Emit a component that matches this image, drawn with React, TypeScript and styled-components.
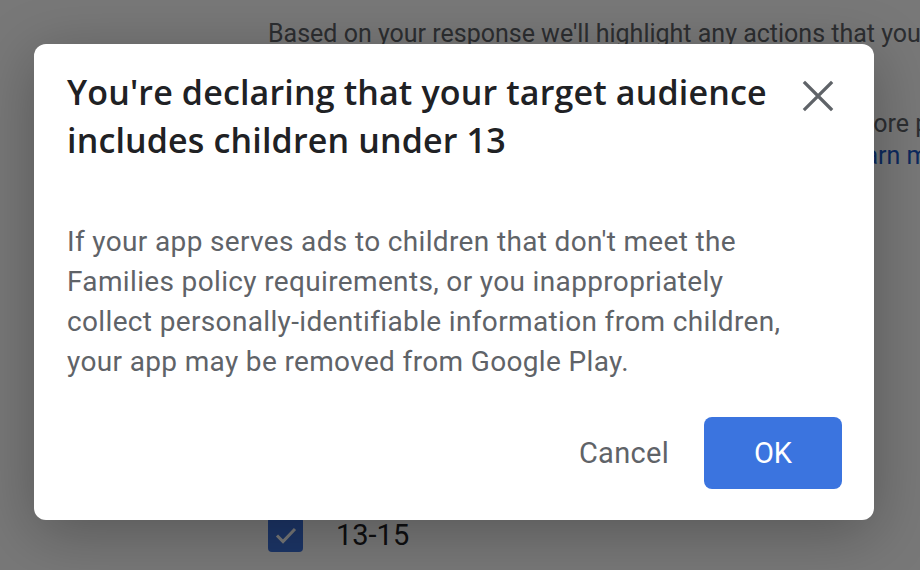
import React from "react";
import styled, { createGlobalStyle } from "styled-components";

const Global = createGlobalStyle`
  html, body { margin: 0; padding: 0; background: #ffffff; }
  body { width: 920px; height: 570px; overflow: hidden; font-family: Roboto, "Liberation Sans", sans-serif; }
  #root { width: 920px; height: 570px; position: relative; }
`;

const Page = styled.div`
  width: 920px;
  height: 570px;
  box-sizing: border-box;
  padding: 18px 0 0 268px;
  display: flex;
  flex-direction: column;
  overflow: hidden;
`;

const BgLine = styled.div<{ $gap?: number }>`
  font-family: Roboto, "Liberation Sans", sans-serif;
  font-size: 25px;
  line-height: 32px;
  white-space: nowrap;
  color: #5f6368;
  margin-top: ${(p) => p.$gap ?? 0}px;
`;

const BgLink = styled.span`
  color: #1a57c6;
`;

const Spacer = styled.div`
  flex: 1;
`;

const CheckRow = styled.div`
  display: flex;
  align-items: center;
  gap: 33px;
  margin-bottom: 18px;
`;

const CheckBox = styled.div`
  width: 35px;
  height: 35px;
  border-radius: 4px;
  background: #3d72dc;
  display: flex;
  align-items: center;
  justify-content: center;
`;

const CheckLabel = styled.span`
  font-size: 29px;
  color: #202124;
`;

const Overlay = styled.div`
  position: absolute;
  inset: 0;
  background: rgba(0, 0, 0, 0.53);
  display: flex;
  align-items: flex-start;
  padding: 44px 0 0 34px;
  box-sizing: border-box;
`;

const Dialog = styled.div`
  width: 840px;
  height: 476px;
  box-sizing: border-box;
  background: #ffffff;
  border-radius: 12px;
  box-shadow: 0 12px 60px rgba(0, 0, 0, 0.28);
  padding: 24px 32px 31px 33px;
  display: flex;
  flex-direction: column;
`;

const Header = styled.div`
  display: flex;
  justify-content: space-between;
  align-items: flex-start;
`;

const Title = styled.h2`
  margin: 0;
  font-family: "Open Sans", Roboto, sans-serif;
  font-weight: 600;
  font-size: 34px;
  line-height: 48px;
  color: #202124;
  letter-spacing: 0.15px;
`;

const CloseButton = styled.button`
  border: 0;
  background: none;
  padding: 0;
  margin: 12px 8px 0 0;
  width: 32px;
  height: 32px;
  cursor: pointer;
`;

const Body = styled.p`
  margin: 58px 0 0 0;
  font-family: Roboto, "Liberation Sans", sans-serif;
  font-size: 28px;
  line-height: 40px;
  letter-spacing: 0.35px;
  color: #5f6368;
  white-space: nowrap;
`;

const Actions = styled.div`
  margin-top: auto;
  display: flex;
  justify-content: flex-end;
  align-items: center;
  gap: 35px;
`;

const TextButton = styled.button`
  border: 0;
  background: none;
  font-family: Roboto, "Liberation Sans", sans-serif;
  font-size: 29px;
  letter-spacing: 0.3px;
  color: #5f6368;
  padding: 0;
`;

const PrimaryButton = styled.button`
  border: 0;
  width: 138px;
  height: 72px;
  border-radius: 8px;
  background: #3b74df;
  color: #ffffff;
  font-family: Roboto, "Liberation Sans", sans-serif;
  font-size: 29px;
`;

export default function App() {
  return (
    <>
      <Global />
      <Page>
        <BgLine>Based on your response we'll highlight any actions that you need to take</BgLine>
        <BgLine $gap={58}>If the audience includes children, you'll need to meet more policy</BgLine>
        <BgLine>
          requirements on ads, private data and app content. <BgLink>Learn more</BgLink>
        </BgLine>
        <Spacer />
        <CheckRow>
          <CheckBox>
            <svg width="24" height="24" viewBox="0 0 24 24">
              <path d="M3 12.5 L9 18.5 L21 6" fill="none" stroke="#ffffff" strokeWidth="3" />
            </svg>
          </CheckBox>
          <CheckLabel>13-15</CheckLabel>
        </CheckRow>
      </Page>
      <Overlay>
        <Dialog role="dialog">
          <Header>
            <Title>
              You're declaring that your target audience
              <br />
              includes children under 13
            </Title>
            <CloseButton aria-label="Close">
              <svg width="32" height="32" viewBox="0 0 32 32">
                <path d="M3 3 L29 29 M29 3 L3 29" stroke="#5f6368" strokeWidth="3.2" strokeLinecap="square" />
              </svg>
            </CloseButton>
          </Header>
          <Body>
            If your app serves ads to children that don't meet the
            <br />
            Families policy requirements, or you inappropriately
            <br />
            collect personally-identifiable information from children,
            <br />
            your app may be removed from Google Play.
          </Body>
          <Actions>
            <TextButton>Cancel</TextButton>
            <PrimaryButton>OK</PrimaryButton>
          </Actions>
        </Dialog>
      </Overlay>
    </>
  );
}
